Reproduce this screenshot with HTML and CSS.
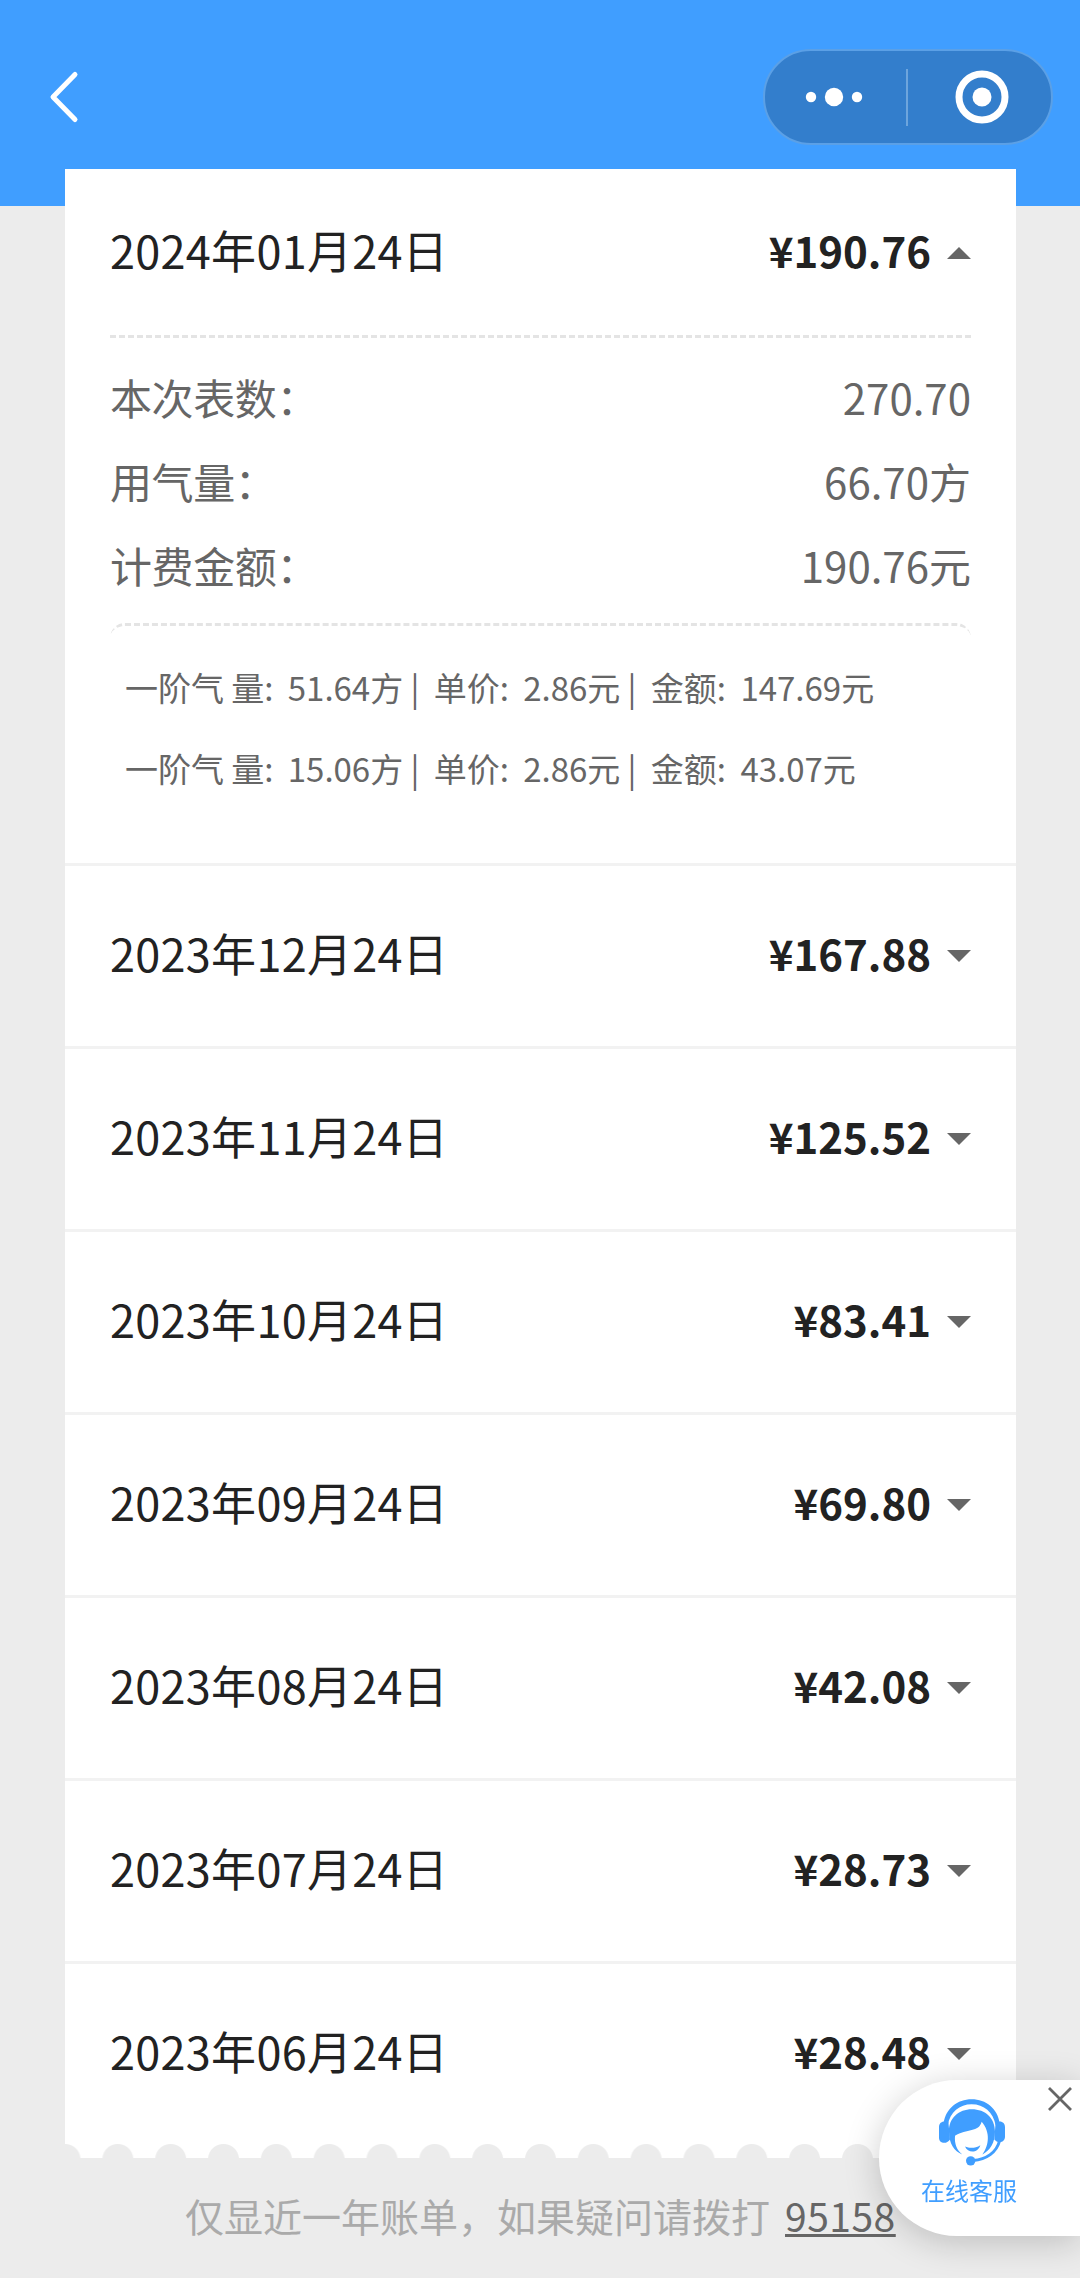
FILE: index.html
```html
<!DOCTYPE html>
<html lang="zh-CN">
<head>
  <meta charset="UTF-8" />
  <meta name="viewport" content="width=device-width, initial-scale=1.0" />
  <title>账单</title>
  <link rel="stylesheet" href="styles.css">
</head>
<body>
  <!-- ============================
       Top Bar
       ============================ -->
  <header class="top-bar">
    <button class="back-btn" aria-label="返回">
      <svg width="32" height="56" viewBox="0 0 32 56" fill="none" stroke="#fff" stroke-width="5" stroke-linecap="round" stroke-linejoin="round">
        <path d="M26 5.5 4 28l22 22.500" />
      </svg>
    </button>
    <div class="capsule">
      <svg class="icon-more" width="60" height="20" viewBox="0 0 60 20" fill="#fff">
        <circle cx="7" cy="10" r="5.200" />
        <circle cx="30" cy="10" r="9.200" />
        <circle cx="53" cy="10" r="5.200" />
      </svg>
      <span class="capsule-line"></span>
      <svg class="icon-close" width="54" height="54" viewBox="0 0 54 54">
        <circle cx="27" cy="27" r="23" fill="none" stroke="#fff" stroke-width="7" />
        <circle cx="27" cy="27" r="9.500" fill="#fff" />
      </svg>
    </div>
  </header>

  <!-- ============================
       Bill List
       ============================ -->
  <main class="bill-card">
    <section class="bill open">
      <div class="bill-head">
        <span class="date">2024年01月24日</span>
        <span class="amount">¥190.76</span>
        <i class="caret up"></i>
      </div>
      <div class="detail">
        <div class="detail-row"><span class="label">本次表数：</span><span>270.70</span></div>
        <div class="detail-row"><span class="label">用气量：</span><span>66.70方</span></div>
        <div class="detail-row"><span class="label">计费金额：</span><span>190.76元</span></div>
      </div>
      <div class="tiers">
        <p>一阶气 量: &nbsp;51.64方 | &nbsp;单价: &nbsp;2.86元 | &nbsp;金额: &nbsp;147.69元</p>
        <p>一阶气 量: &nbsp;15.06方 | &nbsp;单价: &nbsp;2.86元 | &nbsp;金额: &nbsp;43.07元</p>
      </div>
    </section>
    <section class="bill">
      <div class="bill-head">
        <span class="date">2023年12月24日</span>
        <span class="amount">¥167.88</span>
        <i class="caret"></i>
      </div>
    </section>
    <section class="bill">
      <div class="bill-head">
        <span class="date">2023年11月24日</span>
        <span class="amount">¥125.52</span>
        <i class="caret"></i>
      </div>
    </section>
    <section class="bill">
      <div class="bill-head">
        <span class="date">2023年10月24日</span>
        <span class="amount">¥83.41</span>
        <i class="caret"></i>
      </div>
    </section>
    <section class="bill">
      <div class="bill-head">
        <span class="date">2023年09月24日</span>
        <span class="amount">¥69.80</span>
        <i class="caret"></i>
      </div>
    </section>
    <section class="bill">
      <div class="bill-head">
        <span class="date">2023年08月24日</span>
        <span class="amount">¥42.08</span>
        <i class="caret"></i>
      </div>
    </section>
    <section class="bill">
      <div class="bill-head">
        <span class="date">2023年07月24日</span>
        <span class="amount">¥28.73</span>
        <i class="caret"></i>
      </div>
    </section>
    <section class="bill">
      <div class="bill-head">
        <span class="date">2023年06月24日</span>
        <span class="amount">¥28.48</span>
        <i class="caret"></i>
      </div>
    </section>
  </main>
  <div class="card-edge"></div>

  <footer class="note">
    <span>仅显近一年账单，如果疑问请拨打</span>
    <a class="phone">95158</a>
  </footer>

  <!-- ============================
       Online Service Button
       ============================ -->
  <aside class="service">
    <div class="service-body">
      <svg class="service-icon" width="66" height="67" viewBox="0 0 198 200" fill="#409eff">
        <path d="M14 72C20 28 55 0 98 0s78 28 84 72l-12 6C162 38 135 15 98 15S34 38 26 78z" />
        <path d="M30 98C28 57 60 30 98 30c42 0 70 27 70 68 0 32-15 57-38 68 20-26 25-67-2-98-8 32-45 20-80 42-2 26 6 43 22 56-25-9-40-33-40-68z" />
        <path d="M16 67h12l5 54c-5 7-11 10-17 10C6 131 0 125 0 116V84c0-10 6-17 16-17zM182 67h-12l-4 54c4 5 9 8 16 8 10 0 16-7 16-16V84c0-10-6-17-16-17z" />
        <path d="M78 142c14 6 31 6 46-4-7 24-37 25-46 4z" />
        <path d="M182 124c-9 36-40 57-80 60" fill="none" stroke="#409eff" stroke-width="9" />
        <circle cx="95" cy="185" r="14" />
      </svg>
      <span>在线客服</span>
    </div>
    <svg class="service-close" width="24" height="24" viewBox="0 0 24 24" stroke="#666" stroke-width="2.800">
      <path d="M1 1l22 22M23 1 1 23" />
    </svg>
  </aside>
</body>
</html>
```

FILE: styles.css
```css
/* ============================
   Basic Reset
   ============================ */
* {
  margin: 0;
  padding: 0;
  box-sizing: border-box;
}

body {
  height: 2278px;
  overflow: hidden;
  background-color: #ececec;
  color: #222;
  font-family: "Noto Sans CJK SC", "Noto Sans", sans-serif;
}

svg {
  display: block;
}

/* ============================
   Top Bar
   ============================ */
.top-bar {
  display: flex;
  justify-content: space-between;
  align-items: flex-start;
  height: 206px;
  padding: 49px 27px 0 49px;
  background-color: #409eff;
}

.back-btn {
  margin-top: 20px;
  background: none;
  border: none;
}

.capsule {
  display: flex;
  align-items: center;
  width: 290px;
  height: 96px;
  padding-left: 39px;
  border: 2px solid #5ba0e6;
  border-radius: 48px;
  background-color: #337ecc;
}

.capsule-line {
  width: 2px;
  height: 57px;
  margin: 0 47px 0 42px;
  background-color: #6da5dd;
}

/* ============================
   Bill List
   ============================ */
.bill-card {
  width: 951px;
  margin: -37px 0 0 65px;
  background-color: #fff;
}

.bill {
  border-bottom: 3px solid #f2f2f2;
}

.bill:last-child {
  border-bottom: none;
}

.bill-head {
  display: flex;
  align-items: center;
  height: 180px;
  padding: 0 45px 6px;
}

.date {
  flex: 1;
  font-size: 45px;
  line-height: 66px;
  letter-spacing: 0.3px;
}

.amount {
  font-size: 42px;
  font-weight: 700;
  line-height: 62px;
}

.caret {
  margin: 6px 0 0 16px;
  border: 12px solid transparent;
  border-top-color: #666;
  border-bottom: none;
}

.caret.up {
  border-top: none;
  border-bottom: 12px solid #666;
}

.open {
  height: 697px;
}

.open .bill-head {
  height: 166px;
  padding-bottom: 4px;
}

/* ============================
   Expanded Detail
   ============================ */
.detail,
.tiers {
  margin: 0 45px;
  border-top: 3px dashed #e4e4e4;
  color: #666;
}

.detail {
  padding-top: 17px;
}

.detail-row {
  display: flex;
  justify-content: space-between;
  font-size: 42px;
  line-height: 84px;
}

.label {
  letter-spacing: -0.4px;
}

.tiers {
  margin-top: 16px;
  padding: 21px 15px 0;
  border-radius: 15px;
  font-size: 33px;
  line-height: 81px;
  word-spacing: -0.2px;
  white-space: nowrap;
}

/* Scalloped bottom of the card */
.card-edge {
  width: 951px;
  height: 14px;
  margin-left: 65px;
  background-image: radial-gradient(circle at 50% 15.5px, #ececec 15px, #fff 16px);
  background-size: 52.83px 14px;
  background-position: -26.42px 0;
}

/* ============================
   Footer Note
   ============================ */
.note {
  display: flex;
  gap: 15px;
  padding: 27px 0 0 185px;
  font-size: 39px;
  line-height: 60px;
  color: #aaa;
}

.phone {
  color: #666;
  letter-spacing: 0.5px;
  text-decoration: underline;
  text-decoration-thickness: 3px;
  text-underline-offset: 2px;
}

/* ============================
   Online Service Button
   ============================ */
.service {
  position: fixed;
  top: 2080px;
  right: 0;
  width: 201px;
  height: 156px;
  border-radius: 78px 0 0 78px;
  background-color: #fff;
  box-shadow: 0 6px 36px rgba(0, 0, 0, 0.2);
}

.service-body {
  display: flex;
  flex-direction: column;
  align-items: center;
  width: 96px;
  margin-left: 42px;
  padding-top: 19px;
  color: #409eff;
  font-size: 24px;
  line-height: 36px;
}

.service-icon {
  margin-left: 6px;
}

.service-body span {
  margin-top: 6px;
}

.service-close {
  position: absolute;
  top: 7px;
  right: 8px;
}
```
